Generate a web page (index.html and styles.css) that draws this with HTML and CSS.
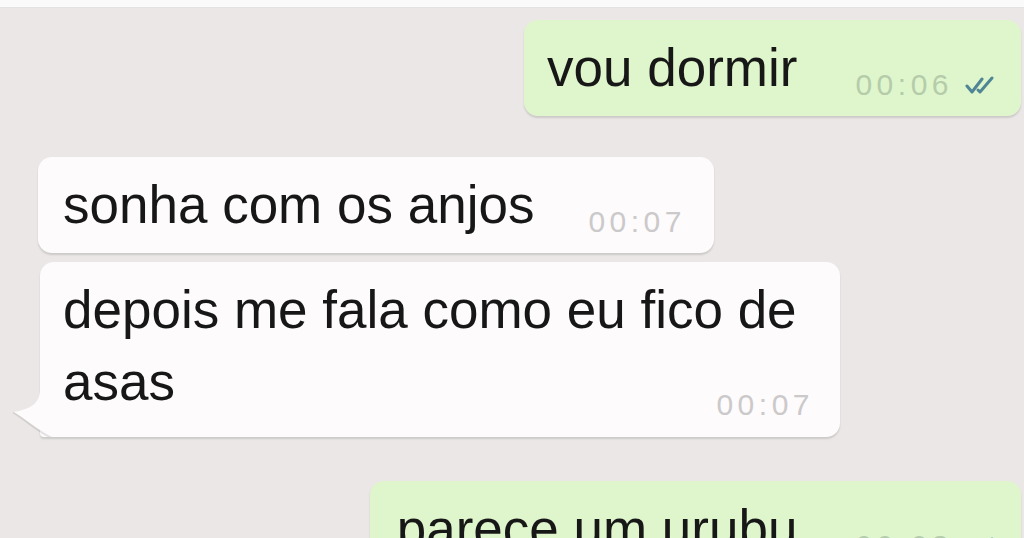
FILE: index.html
```html
<!DOCTYPE html>
<html lang="pt">
<head>
    <meta charset="UTF-8">
    <meta name="viewport" content="width=device-width, initial-scale=1.0">
    <title>Conversa</title>
    <link rel="stylesheet" href="styles.css">
</head>
<body>
    <div class="topbar"></div>
    <main class="chat">
        <div class="msg out first">
            <p class="text">vou dormir</p>
            <span class="meta">
                <span class="time">00:06</span>
                <svg class="ticks" viewBox="0 0 34 20" width="34" height="20">
                    <polyline points="2,11 7,17 17,4" />
                    <polyline points="13,15 15,17 27,3" />
                </svg>
            </span>
        </div>

        <div class="msg in second">
            <p class="text">sonha com os anjos</p>
            <span class="meta"><span class="time">00:07</span></span>
        </div>

        <div class="msg in long">
            <p class="text">depois me fala como eu fico de asas</p>
            <span class="meta"><span class="time">00:07</span></span>
            <svg class="tail" viewBox="0 0 40 48" width="40" height="48">
                <path class="tail-fill" d="M28 0 C28 12 22 20 1 23 C14 30 26 42 40 48 L40 0 Z" />
                <path class="tail-edge" d="M1 23.5 C14 31 26 43 40 49" />
            </svg>
        </div>

        <div class="msg out last">
            <p class="text">parece um urubu</p>
            <span class="meta">
                <span class="time">00:08</span>
                <svg class="ticks" viewBox="0 0 34 20" width="34" height="20">
                    <polyline points="2,11 7,17 17,4" />
                    <polyline points="13,15 15,17 27,3" />
                </svg>
            </span>
        </div>
    </main>
</body>
</html>
```

FILE: styles.css
```css
html, body {
    margin: 0;
    padding: 0;
    overflow: hidden;
}

body {
    font-family: 'Liberation Sans', Arial, sans-serif;
    background-color: #ebe7e7;
    height: 538px;
}

.topbar {
    height: 7px;
    background-color: #fafafa;
    border-bottom: 1px solid #e4e2e2;
}

.chat {
    display: flex;
    flex-direction: column;
    padding: 12px 3px 0 38px;
}

.msg {
    display: flex;
    flex-wrap: wrap;
    align-items: flex-end;
    box-sizing: border-box;
    padding: 12px 22px 12px 23px;
    border-radius: 14px;
    box-shadow: 0 2px 2px rgba(0, 0, 0, 0.13);
}

.msg.out {
    align-self: flex-end;
    background-color: #dff6cc;
    column-gap: 58px;
}

.msg.in {
    align-self: flex-start;
    background-color: #fdfbfc;
    column-gap: 54px;
}

.text {
    margin: 0;
    font-size: 53px;
    line-height: 72px;
    color: #171717;
}

.meta {
    display: flex;
    align-items: center;
    gap: 12px;
    margin-bottom: 4px;
    font-size: 30px;
    line-height: 30px;
    letter-spacing: 4.5px;
}

.out .time {
    color: #b5ccab;
}

.in .time {
    color: #cbc9ca;
}

.ticks {
    fill: none;
    stroke: #4f8595;
    stroke-width: 3;
    stroke-linecap: round;
    stroke-linejoin: round;
}

/* spacing between the bubbles */
.second {
    margin-top: 41px;
    padding-left: 25px;
    padding-right: 28px;
}

.long {
    position: relative;
    width: 800px;
    margin-top: 9px;
    margin-left: 2px;
    padding-right: 26px;
    padding-bottom: 17px;
    border-bottom-left-radius: 4px;
}

.long .meta {
    margin-left: auto;
    margin-top: -28px;
    margin-bottom: 0;
}

.tail {
    position: absolute;
    left: -28px;
    bottom: 0;
}

.tail-fill {
    fill: #fdfbfc;
}

.tail-edge {
    fill: none;
    stroke: rgba(0, 0, 0, 0.1);
    stroke-width: 2;
}

.last {
    margin-top: 44px;
    padding-left: 27px;
    column-gap: 62px;
}
```
